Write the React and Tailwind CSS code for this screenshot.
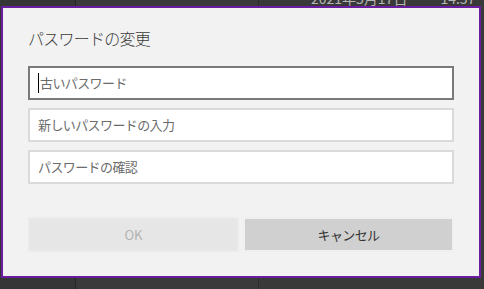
const jp = "font-['Yu_Gothic_UI','Noto_Sans_CJK_JP',sans-serif]";

const Field = ({ focused = false, children }) => (
  <div
    className={`relative flex items-center h-[34px] bg-white border-2 pl-[8px] ${
      focused ? "border-[#7a7a7a]" : "border-[#dadada]"
    }`}
  >
    {focused && <span className="w-px h-[20px] bg-black mr-px" />}
    <span className="text-[13px] tracking-[-0.6px] text-[#6b6b6b]">{children}</span>
  </div>
);

export default function App() {
  return (
    <div className={`relative w-[484px] h-[289px] overflow-hidden bg-[#393939] ${jp}`}>
      {/* the app behind the dialog */}
      <div className="flex h-full">
        <div className="w-[76px] border-r border-[#262626] bg-[#363636]" />
        <div className="w-[183px] border-r border-[#2c2c2c] bg-[#3a3a3a]" />
        <div className="flex-1 flex gap-[33px] pl-[52px] -mt-[12px] text-[14px] text-[#b5b5b5]">
          <span>2021年5月17日</span>
          <span>14:37</span>
        </div>
      </div>

      {/* dialog */}
      <div className="absolute left-[1px] top-[6px] w-[480px] h-[272px] border-2 border-[#6c1d9f] bg-[#f2f2f2] px-[25px] pt-[18px]">
        <h1 className="h-[24px] leading-[24px] text-[16px] tracking-[-0.75px] text-[#3a3a3a] font-light">
          パスワードの変更
        </h1>
        <div className="mt-[16px] flex flex-col gap-[8px]">
          <Field focused>古いパスワード</Field>
          <Field>新しいパスワードの入力</Field>
          <Field>パスワードの確認</Field>
        </div>
        <div className="mt-[33px] grid grid-cols-2 gap-[4px] h-[35px]">
          <button className="border-2 border-[#ebebeb] bg-[#e6e6e6] text-[13px] text-[#b3b3b3]">
            OK
          </button>
          <button className="border-2 border-[#f0f0f0] bg-[#d0d0d0] text-[13px] tracking-[-0.6px] text-[#333333]">
            キャンセル
          </button>
        </div>
      </div>
    </div>
  );
}
